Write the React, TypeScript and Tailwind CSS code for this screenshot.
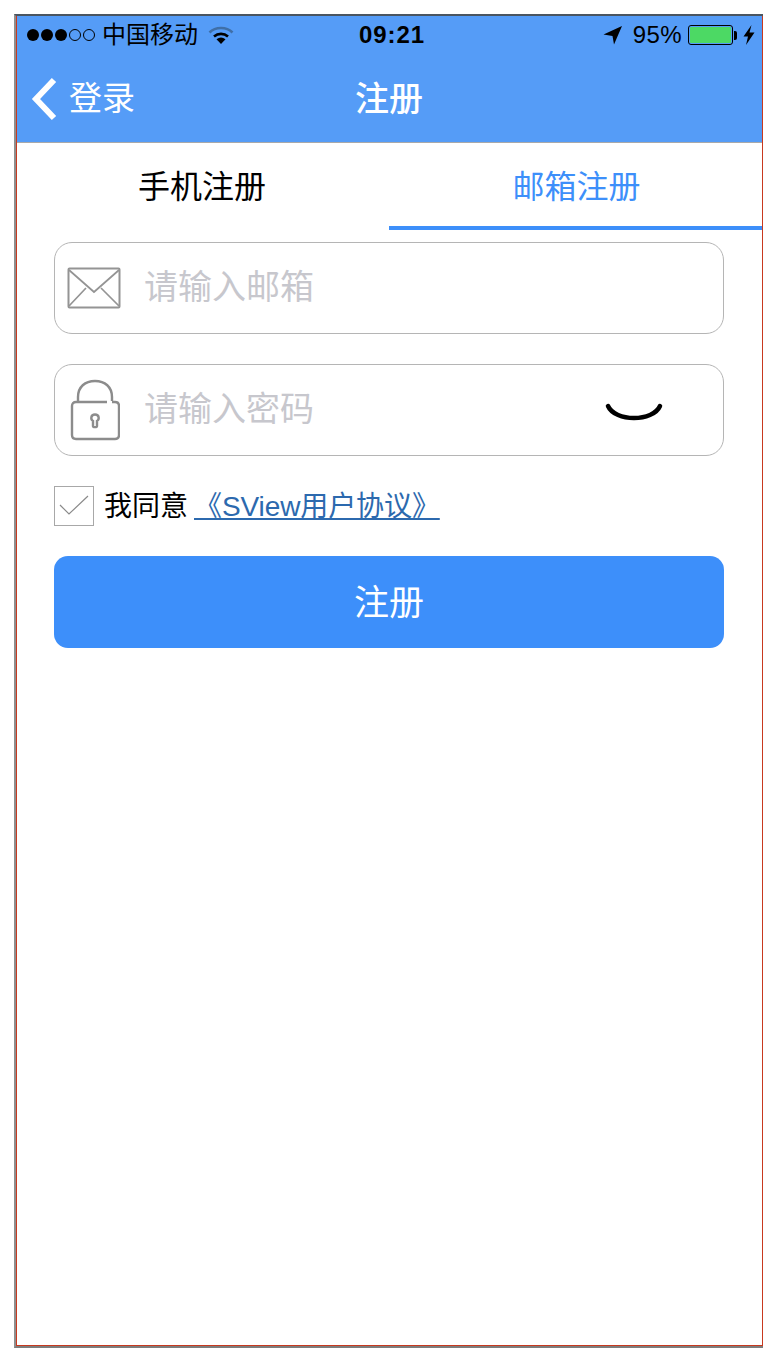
const CJK = "font-['Liberation_Sans','Noto_Sans_CJK_SC',sans-serif]";

function Wifi() {
  return (
    <svg width="26" height="20" viewBox="0 0 26 20" className="-mt-[1px]">
      <path d="M1.5 7.5C7.5 1.5 18.5 1.5 24.5 7.5" fill="none" stroke="#3f6fa8" strokeWidth="2.6" />
      <path d="M6 11.5C10 8 16 8 20 11.5" fill="none" stroke="#000" strokeWidth="2.6" />
      <path d="M8.5 14.2C11.5 12 14.5 12 17.5 14.2L13 19Z" fill="#000" />
    </svg>
  );
}

function StatusBar() {
  return (
    <div className="h-[38px] flex items-center justify-between text-black relative">
      <div className="flex items-center pl-[10px]">
        <div className="flex gap-[2px] items-center">
          <span className="w-[12px] h-[12px] rounded-full bg-black" />
          <span className="w-[12px] h-[12px] rounded-full bg-black" />
          <span className="w-[12px] h-[12px] rounded-full bg-black" />
          <span className="w-[12px] h-[12px] rounded-full border border-black" />
          <span className="w-[12px] h-[12px] rounded-full border border-black" />
        </div>
        <span className="ml-[7px] text-[24px] leading-[36px] whitespace-nowrap">中国移动</span>
        <span className="ml-[10px]"><Wifi /></span>
      </div>
      <span className="absolute left-[342px] top-0 text-[24px] leading-[38px] font-bold tracking-[0.9px]">09:21</span>
      <div className="flex items-center pr-[7px]">
        <svg width="20" height="20" viewBox="0 0 20 20">
          <path d="M0.5 9.5L19 1L11 19.5L9.5 11Z" fill="#000" />
        </svg>
        <span className="ml-[10px] text-[24px] leading-[38px] tracking-[0.4px]">95%</span>
        <div className="ml-[6px] w-[45px] h-[20px] rounded-[3px] border border-black p-[1px]">
          <div className="w-full h-full bg-[#4cd964] rounded-[1px]" />
        </div>
        <span className="w-[3px] h-[9px] bg-black rounded-r-[2px] ml-[1px]" />
        <svg width="12" height="20" viewBox="0 0 12 20" className="ml-[6px]">
          <path d="M8.5 0L0.5 11.5H5L3 20L11.5 7.5H6.5Z" fill="#000" />
        </svg>
      </div>
    </div>
  );
}

function Mail() {
  return (
    <svg width="54" height="42" viewBox="0 0 54 42" fill="none" stroke="#949494" strokeWidth="1.7">
      <rect x="1.5" y="1.5" width="51" height="39" rx="1" strokeWidth="2" />
      <path d="M2 3L27 25L52 3M2 39L19 21M52 39L34 21" />
    </svg>
  );
}

function Lock() {
  return (
    <svg width="50" height="62" viewBox="0 0 50 62" fill="none" stroke="#8c8c8c" strokeWidth="2.4">
      <path d="M8 24V18C8 8 15 2 25 2C35 2 42 8 42 18V22" />
      <path d="M37 23H6C3.5 23 2 24.5 2 27V56C2 58.5 3.5 60 6 60H45C47.5 60 49 58.5 49 56V27C49 24.5 47.5 23 45 23H42" />
      <path d="M23 47V42C20.5 40.5 20.5 35.5 25 35.5C29.5 35.5 29.5 40.5 27 42V47C27 48.5 23 48.5 23 47Z" />
    </svg>
  );
}

export default function App() {
  return (
    <div className={`w-[777px] h-[1362px] bg-white pt-[14px] pl-[14px] ${CJK}`}>
      <div className="w-[749px] h-[1334px] border-l-2 border-t-2 border-b-2 border-l-[#8f8f8f] border-t-[#4a5560] border-b-[#7d7d7d]">
        <div className="h-full border-l border-r border-b border-[#c8391f] flex flex-col">
          <div className="h-[127px] bg-[#559cf7] border-b border-[#a9a9a9] flex flex-col">
            <StatusBar />
            <div className="flex-1 relative flex items-center justify-center text-white text-[33px]">
              <div className="absolute left-[14px] top-[23px] flex items-center">
                <svg width="26" height="44" viewBox="0 0 26 44" fill="none" stroke="#fff" strokeWidth="6">
                  <path d="M23 3L5 22L23 41" />
                </svg>
                <span className="ml-[12px] leading-[44px]">登录</span>
              </div>
              <span className="font-medium text-[34px] leading-[44px] -ml-[1px] mt-[2px]">注册</span>
            </div>
          </div>

          <div className="flex h-[87px] text-[32px]">
            <div className="w-[372px] flex items-center justify-center text-black pb-[4px] pr-[2px]">
              <span className="mt-[4px]">手机注册</span>
            </div>
            <div className="flex-1 flex items-center justify-center text-[#3d8ffa] border-b-4 border-[#3d8ffa] pl-[2px]">
              <span className="mt-[4px]">邮箱注册</span>
            </div>
          </div>

          <div className="pt-[12px] pl-[37px] pr-[38px] flex flex-col">
            <div className="h-[92px] rounded-[18px] border border-[#b5b5b5] flex items-center pl-[12px]">
              <Mail />
              <input
                readOnly
                placeholder="请输入邮箱"
                className="ml-[23px] mb-[2px] flex-1 min-w-0 h-[42px] text-[34px] leading-[42px] outline-none placeholder:text-[#c7c7cd]"
              />
            </div>

            <div className="mt-[30px] h-[92px] rounded-[18px] border border-[#b5b5b5] flex items-center pl-[15px] relative">
              <Lock />
              <input
                readOnly
                placeholder="请输入密码"
                className="ml-[24px] mb-[2px] flex-1 min-w-0 h-[42px] text-[34px] leading-[42px] outline-none placeholder:text-[#c7c7cd]"
              />
              <svg width="60" height="22" viewBox="0 0 60 22" fill="none" stroke="#000" strokeWidth="4.5" strokeLinecap="round" className="absolute left-[550px] top-[36px] blur-[0.6px]">
                <path d="M3 5C10 21 48 21 55 5" />
              </svg>
            </div>

            <div className="mt-[30px] flex items-center h-[40px]">
              <div className="w-[40px] h-[40px] border border-[#a8a8a8] flex items-center justify-center">
                <svg width="30" height="22" viewBox="0 0 30 22" fill="none" stroke="#8a8a8a" strokeWidth="1.2">
                  <path d="M1 10L10 19L29 1" />
                </svg>
              </div>
              <span className="ml-[10px] text-[28px] leading-[40px] text-black mt-[2px]">我同意</span>
              <a className="ml-[6px] text-[28px] leading-[40px] text-[#2c69ae] underline whitespace-pre tracking-[-0.1px] mt-[2px]">《SView用户协议》</a>
            </div>

            <button className="mt-[30px] h-[92px] rounded-[14px] bg-[#3d8ffa] text-white text-[35px] pt-[2px]">注册</button>
          </div>
        </div>
      </div>
    </div>
  );
}
